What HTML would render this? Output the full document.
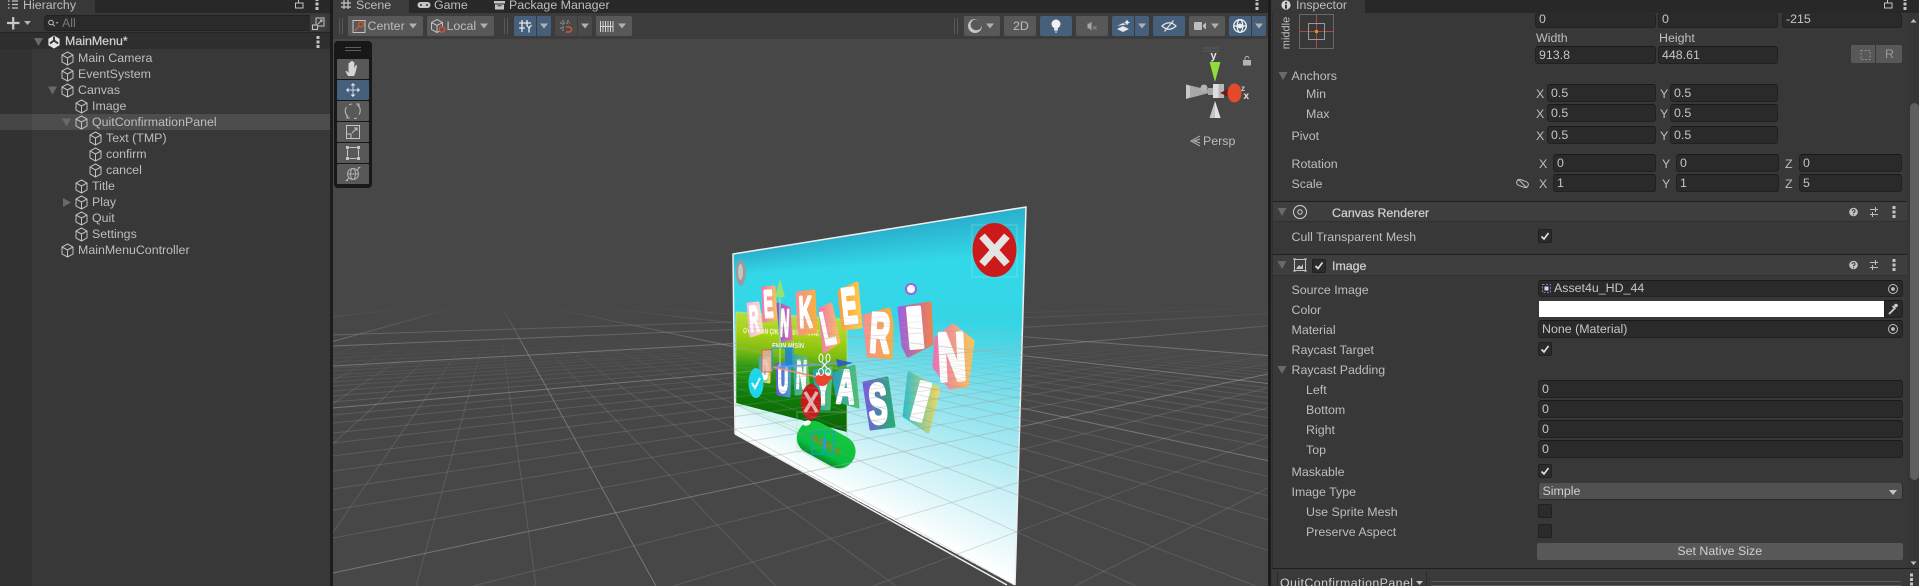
<!DOCTYPE html>
<html><head><meta charset="utf-8"><style>
html,body{margin:0;padding:0;width:1919px;height:586px;overflow:hidden;background:#383838}
body{position:relative;font-family:"Liberation Sans",sans-serif;font-size:12.4px;color:#bebebe}
#r{position:absolute;left:0;top:0;width:1919px;height:586px;overflow:hidden}
.b,.t,.f{position:absolute}
.t{white-space:nowrap;line-height:16px}
.f{box-sizing:border-box;background:#2a2a2a;border:1px solid #212121;border-top-color:#191919;border-radius:3px;color:#c6c6c6;padding-left:3px;white-space:nowrap}
.h{height:18px;line-height:16px}
.bt{position:absolute;top:16px;height:20px;background:#585858;border-radius:2px}
.bl{background:#46607c}
.tb{position:absolute;left:337px;width:32px;height:20px;background:#585858;border-radius:1px}
.c{position:absolute;width:14px;height:14px;box-sizing:border-box;background:#2b2b2b;border:1px solid #202020;border-radius:2px}
svg{position:absolute;left:0;top:0}
</style></head><body><div id="r">
<!-- Hierarchy -->
<div class="b" style="left:0;top:0;width:333px;height:13px;background:#282828"></div>
<div class="b" style="left:0;top:0;width:95px;height:13px;background:#383838"></div>
<div class="t" style="left:23px;top:-3px;color:#bdbdbd">Hierarchy</div>
<div class="b" style="left:0;top:33px;width:32px;height:553px;background:#323232"></div>
<div class="b" style="left:0;top:13px;width:330px;height:20px;background:#383838;border-bottom:1px solid #242424;box-sizing:border-box"></div>
<div class="b" style="left:44px;top:15px;width:283px;height:16px;background:#2a2a2a;border:1px solid #212121;box-sizing:border-box;border-radius:4px"></div>
<div class="b" style="left:310px;top:15px;width:17px;height:16px;background:#3f3f3f;border-radius:0 4px 4px 0"></div>
<div class="t" style="left:62px;top:15px;color:#7a7a7a">All</div>
<div class="b" style="left:0;top:33px;width:330px;height:16px;background:#2e2e2e"></div>
<div class="t" style="left:65px;top:33px;color:#d0d0d0;-webkit-text-stroke:.25px #d0d0d0">MainMenu*</div>
<div class="b" style="left:0;top:114px;width:32px;height:16px;background:#464646"></div>
<div class="b" style="left:32px;top:114px;width:298px;height:16px;background:#4d4d4d"></div>
<div class="t" style="left:78px;top:50px">Main Camera</div>
<div class="t" style="left:78px;top:66px">EventSystem</div>
<div class="t" style="left:78px;top:82px">Canvas</div>
<div class="t" style="left:92px;top:98px">Image</div>
<div class="t" style="left:92px;top:114px">QuitConfirmationPanel</div>
<div class="t" style="left:106px;top:130px">Text (TMP)</div>
<div class="t" style="left:106px;top:146px">confirm</div>
<div class="t" style="left:106px;top:162px">cancel</div>
<div class="t" style="left:92px;top:178px">Title</div>
<div class="t" style="left:92px;top:194px">Play</div>
<div class="t" style="left:92px;top:210px">Quit</div>
<div class="t" style="left:92px;top:226px">Settings</div>
<div class="t" style="left:78px;top:242px">MainMenuController</div>
<div class="b" style="left:330px;top:0;width:3px;height:586px;background:#1c1c1c"></div>

<!-- Scene -->
<div class="b" style="left:333px;top:39px;width:935px;height:547px;background:#474747"></div>
<div class="b" style="left:0;top:0;width:960px;height:540px;transform-origin:0 0;transform:matrix3d(-0.266532,-0.164309,0,-0.000557252,0.039487,0.354463,0,0.0000486852,0,0,1,0,733,254,0,1);background:linear-gradient(180deg,#2aafcc 0%,#33d8e8 12%,#34d6e6 30%,#80e0ec 50%,#c6f0f6 74%,#ffffff 100%)"></div>

<svg width="935" height="547" viewBox="333 39 935 547" style="left:333px;top:39px">
<defs>
<linearGradient id="mk1" gradientUnits="userSpaceOnUse" x1="0" y1="335" x2="0" y2="400"><stop offset="0" stop-color="#000"/><stop offset="1" stop-color="#fff"/></linearGradient>
<linearGradient id="mk2" gradientUnits="userSpaceOnUse" x1="0" y1="305" x2="0" y2="350"><stop offset="0" stop-color="#000"/><stop offset="1" stop-color="#fff"/></linearGradient>
<mask id="m1" maskUnits="userSpaceOnUse" x="333" y="39" width="935" height="547"><rect x="333" y="39" width="935" height="547" fill="url(#mk1)"/></mask>
<mask id="m2" maskUnits="userSpaceOnUse" x="333" y="39" width="935" height="547"><rect x="333" y="39" width="935" height="547" fill="url(#mk2)"/></mask>
<linearGradient id="gr" gradientUnits="userSpaceOnUse" x1="790" y1="312" x2="780" y2="425"><stop offset="0" stop-color="#b9e24a"/><stop offset=".2" stop-color="#a9d40e"/><stop offset=".36" stop-color="#7fc00c"/><stop offset=".5" stop-color="#2f9c12"/><stop offset=".72" stop-color="#108008"/><stop offset="1" stop-color="#0a6306"/></linearGradient>
<linearGradient id="l1"><stop offset="0" stop-color="#f8b8d8"/><stop offset="1" stop-color="#fbe0c8"/></linearGradient>
<linearGradient id="l2"><stop offset="0" stop-color="#f47ab0"/><stop offset="1" stop-color="#f8c060"/></linearGradient>
<linearGradient id="l3"><stop offset="0" stop-color="#8a5ad8"/><stop offset="1" stop-color="#e06cb0"/></linearGradient>
<linearGradient id="l4"><stop offset="0" stop-color="#f89090"/><stop offset="1" stop-color="#f8b040"/></linearGradient>
<linearGradient id="l5"><stop offset="0" stop-color="#f8a040"/><stop offset="1" stop-color="#ffc850"/></linearGradient>
<linearGradient id="l6"><stop offset="0" stop-color="#9a60e0"/><stop offset="1" stop-color="#f08050"/></linearGradient>
<linearGradient id="l7"><stop offset="0" stop-color="#f070b8"/><stop offset="1" stop-color="#f8c858"/></linearGradient>
<linearGradient id="l8"><stop offset="0" stop-color="#38b0b0"/><stop offset="1" stop-color="#e8d860"/></linearGradient>
<linearGradient id="l9"><stop offset="0" stop-color="#6a5ae0"/><stop offset="1" stop-color="#40a0d0"/></linearGradient>
<linearGradient id="l10"><stop offset="0" stop-color="#30b0a0"/><stop offset="1" stop-color="#70c060"/></linearGradient>
<linearGradient id="l11"><stop offset="0" stop-color="#20a0c0"/><stop offset="1" stop-color="#50c070"/></linearGradient>
<linearGradient id="l12"><stop offset="0" stop-color="#7a5ae0"/><stop offset="1" stop-color="#20b070"/></linearGradient>
<linearGradient id="l13"><stop offset="0" stop-color="#30c0c8"/><stop offset="1" stop-color="#f0d860"/></linearGradient>
<linearGradient id="btn" x1="0" y1="0" x2="0" y2="1"><stop offset="0" stop-color="#14c83c"/><stop offset=".75" stop-color="#08c040"/><stop offset="1" stop-color="#058c2c"/></linearGradient>
</defs>

<polyline points="735,434 733,254 1026,207 1015,585" fill="none" stroke="#eeeeee" stroke-width="1.5"/>
<line x1="735" y1="434" x2="1007" y2="585" stroke="#eeeeee" stroke-width="1.5"/>
<!-- green panel -->
<polygon points="736,312 847,319 847,432 736,403" fill="url(#gr)"/>
<text x="743" y="333" font-size="7.5" font-weight="700" fill="#f4f4f4" textLength="76" lengthAdjust="spacingAndGlyphs" transform="rotate(2 743 333)">OYUNDAN ÇIKMAK İSTEDİĞİNE</text>
<text x="772" y="348" font-size="7" font-weight="700" fill="#f0f0f0" textLength="32" lengthAdjust="spacingAndGlyphs">EMİN MİSİN</text>
<polygon points="736,312 847,319 847,450 736,403" fill="none" stroke="#a8f0a0" stroke-opacity=".6" stroke-width="1"/>

<!-- top-right close and oval -->
<rect x="972" y="225" width="45" height="52" fill="none" stroke="#a8f0d0" stroke-opacity=".35" transform="skewY(-3 994 250)"/>
<ellipse cx="994.5" cy="250" rx="22" ry="27" fill="#cc1a1a"/>
<path d="M982 236L1007 264M1007 236L982 264" stroke="#e4e4e4" stroke-width="7.5"/>
<ellipse cx="740.8" cy="272.7" rx="5" ry="13" fill="#9a9a9a"/><ellipse cx="740.5" cy="272" rx="2.5" ry="8" fill="#c4c4c4"/>

<!-- letter backs -->
<g stroke-width="3" stroke-linejoin="round">
<polygon points="748,304 758,303 762,332 751,336" fill="url(#l1)" stroke="url(#l1)"/>
<polygon points="763,288 774,287 776,319 764,321" fill="url(#l2)" stroke="url(#l2)"/>
<polygon points="778,304 789,308 791,339 781,341" fill="url(#l3)" stroke="url(#l3)"/>
<polygon points="797,293 814,291 816,332 799,334" fill="url(#l4)" stroke="url(#l4)"/>
<polygon points="820,309 831,304 839,342 824,352" fill="url(#l2)" stroke="url(#l2)"/>
<polygon points="839,291 857,283 861,327 843,329" fill="url(#l5)" stroke="url(#l5)"/>
<polygon points="864,316 889,309 892,323 891,358 868,356" fill="url(#l4)" stroke="url(#l4)"/>
<polygon points="899,308 930,303 932,344 908,356 903,346" fill="url(#l6)" stroke="url(#l6)"/>
<polygon points="936,338 953,325 973,341 967,386 950,388 934,367" fill="url(#l7)" stroke="url(#l7)"/>
<polygon points="760,358 769,358 769,382 761,381" fill="url(#l8)" stroke="url(#l8)"/>
<polygon points="777,364 790,364 789,396 778,394" fill="url(#l9)" stroke="url(#l9)"/>
<polygon points="794,356 806,358 809,392 796,394" fill="url(#l10)" stroke="url(#l10)"/>
<polygon points="814,371 831,368 829,409 818,409" fill="url(#l11)" stroke="url(#l11)"/>
<polygon points="833,374 854,366 858,407 838,401" fill="url(#l11)" stroke="url(#l11)"/>
<polygon points="864,383 887,378 894,426 871,429" fill="url(#l12)" stroke="url(#l12)"/>
<polygon points="909,373 939,389 928,432 904,416" fill="url(#l13)" stroke="url(#l13)"/>
</g>
<!-- letters -->
<g font-weight="700" fill="#fff" text-anchor="middle" stroke="#fff" stroke-width="2.6" stroke-linejoin="round">
<text transform="translate(755 331) rotate(-5) scale(.36 1)" font-size="36">R</text>
<text transform="translate(769 317) rotate(-3) scale(.37 1)" font-size="38">E</text>
<text transform="translate(784 336) rotate(3) scale(.33 1)" font-size="38">N</text>
<text transform="translate(806 327) rotate(-2) scale(.42 1)" font-size="44">K</text>
<text transform="translate(831 344) rotate(-12) scale(.44 1)" font-size="47">L</text>
<text transform="translate(851 323) rotate(-6) scale(.46 1)" font-size="50" stroke-width="3.2">E</text>
<text transform="translate(879 352) rotate(3) scale(.5 1)" font-size="56" stroke-width="3.6">R</text>
<text transform="translate(917 348) rotate(-5) scale(1.3 1)" font-size="59" stroke-width="3">I</text>
<text transform="translate(953 380) rotate(-3) scale(.58 1)" font-size="68" stroke-width="4">N</text>
<text transform="translate(765 379) scale(.36 1)" font-size="27">D</text>
<text transform="translate(783 392) scale(.4 1)" font-size="36" stroke-width="3">U</text>
<text transform="translate(801 388) rotate(2) scale(.37 1)" font-size="39" stroke-width="3">N</text>
<text transform="translate(823 404) scale(.45 1)" font-size="44" stroke-width="3">Y</text>
<text transform="translate(845 403) rotate(3) scale(.53 1)" font-size="47" stroke-width="3.2">A</text>
<text transform="translate(879 423) rotate(-3) scale(.5 1)" font-size="56" stroke-width="3.6">S</text>
<text transform="translate(916 420) rotate(15) scale(1.15 1)" font-size="56" stroke-width="3">I</text>
</g>
<circle cx="911" cy="289" r="5" fill="#fff" stroke="#a060e0" stroke-width="2"/>

<!-- small buttons -->
<ellipse cx="756" cy="383" rx="7.5" ry="15" fill="#14dcee"/>
<path d="M752 383l3 5 5-10" fill="none" stroke="#f4ffff" stroke-width="2"/>
<ellipse cx="811" cy="402" rx="10" ry="18" fill="#c81a1a"/>
<path d="M805 392L817 412M817 392L805 412" stroke="#e8b0b0" stroke-width="3.5"/>
<rect x="797" y="412" width="50" height="40" fill="none" stroke="#a8e0b0" stroke-opacity=".4"/>
<g transform="translate(826 445) rotate(29)">
<rect x="-31" y="-16" width="62" height="34" rx="16" fill="#a0d0a0" opacity=".35"/>
<rect x="-31" y="-17" width="62" height="33" rx="16" fill="url(#btn)"/>
<text x="0" y="3" text-anchor="middle" font-size="10" font-weight="700" fill="#a57c14" textLength="32" lengthAdjust="spacingAndGlyphs">BAŞLA</text>
</g>
<ellipse cx="807" cy="423" rx="4" ry="2.5" fill="#fff" transform="rotate(-20 807 423)"/>
<rect x="812" y="432" width="22" height="22" fill="none" stroke="#10a0d8" stroke-width="1.2"/>
<rect x="823" y="437" width="3" height="14" fill="#18a0e0"/>

<!-- floor grid -->
<g mask="url(#m1)" fill="none" stroke="#8f8f8f" stroke-opacity=".3" stroke-width="1">
<path d="M496 296L-2224 586M496 296L-2104 586M496 296L-1984 586M496 296L-1864 586M496 296L-1624 586M496 296L-1504 586M496 296L-1384 586M496 296L-1264 586M496 296L-1144 586M496 296L-1024 586M496 296L-904 586M496 296L-784 586M496 296L-664 586M496 296L-424 586M496 296L-304 586M496 296L-184 586M496 296L-64 586M496 296L56 586M496 296L176 586M496 296L296 586M496 296L416 586M496 296L536 586M496 296L776 586M496 296L896 586M496 296L1016 586M496 296L1136 586M496 296L1256 586M496 296L1376 586M496 296L1496 586M496 296L1616 586M496 296L1736 586M496 296L1976 586M496 296L2096 586M496 296L2216 586M496 296L2336 586M496 296L2456 586M496 296L2576 586M496 296L2696 586M496 296L2816 586M496 296L2936 586M496 296L3176 586M496 296L3296 586M496 296L3416 586M496 296L3536 586M496 296L3656 586M496 296L3776 586M496 296L3896 586M496 296L4016 586M496 296L4136 586"/>
<path d="M333 538L1653 292M333 510L1653 292M333 489L1653 292M333 471L1653 292M333 456L1653 292M333 443L1653 292M333 433L1653 292M333 423L1653 292M333 415L1653 292M333 402L1653 292M333 396L1653 292M333 391L1653 292M333 386L1653 292M333 382L1653 292M333 378L1653 292M333 375L1653 292M333 371L1653 292M333 368L1653 292M333 362L1653 292M333 358L1653 292M333 354L1653 292M473 586L1653 292M673 586L1653 292M873 586L1653 292M1075 586L1653 292M1269 586L1653 292"/>
</g>
<g mask="url(#m2)" fill="none" stroke="#a6a6a6" stroke-opacity=".5" stroke-width="1">
<path d="M496 296L-1744 586M496 296L-544 586M496 296L656 586M496 296L1856 586M496 296L3056 586M496 296L4256 586"/>
<path d="M333 573L1653 292M333 408L1653 292M333 366L1653 292M333 346L1653 292M333 335L1653 292"/>
</g>

<!-- gizmo over panel -->
<rect x="762" y="350" width="10" height="22" fill="#f0b0a8" fill-opacity=".75" stroke="#e06050"/>
<rect x="772" y="348" width="21" height="20" fill="none" stroke="#2098e0" stroke-width="1.2"/>
<rect x="785" y="348" width="7" height="19" fill="#1a80e0" fill-opacity=".85"/>
<path d="M780 296V367" stroke="#a0e880" stroke-opacity=".85" stroke-width="1.5"/>
<polygon points="780,279 775,297 785,297" fill="#98e070"/>
<path d="M775 367L840 363" stroke="#6a9ae8" stroke-width="1.5"/>
<polygon points="853,363 836,359 838,367" fill="#2a60c8"/>
<path d="M773 367L817 377" stroke="#f08a70" stroke-width="1.5"/>
<ellipse cx="822" cy="380" rx="7" ry="6" fill="#e8452a"/><polygon points="834,377 820,373 822,386" fill="#e8452a"/>
<g fill="none" stroke="#fff" stroke-width="1"><ellipse cx="821" cy="358" rx="2" ry="4"/><ellipse cx="828" cy="358" rx="2" ry="4"/><ellipse cx="821" cy="372" rx="2.5" ry="3.5"/><ellipse cx="828" cy="372" rx="2.5" ry="3.5"/><path d="M822 362L827 368M827 362L822 368"/></g>
</svg>

<!-- Scene chrome -->
<div class="b" style="left:333px;top:0;width:935px;height:13px;background:#282828"></div>
<div class="b" style="left:333px;top:0;width:76px;height:13px;background:#3c3c3c"></div>
<div class="t" style="left:356px;top:-3px">Scene</div>
<div class="t" style="left:434px;top:-3px">Game</div>
<div class="t" style="left:509px;top:-3px">Package Manager</div>
<div class="b" style="left:333px;top:13px;width:935px;height:26px;background:#3c3c3c"></div>
<div class="bt" style="left:348px;width:75px"></div>
<div class="t" style="left:367.5px;top:18px;color:#bdbdbd">Center</div>
<div class="bt" style="left:427px;width:67px"></div>
<div class="t" style="left:446.5px;top:18px;color:#bdbdbd">Local</div>
<div class="bt bl" style="left:514px;width:22px;border-radius:2px 0 0 2px"></div>
<div class="bt bl" style="left:537px;width:14px;border-radius:0 2px 2px 0"></div>
<div class="bt" style="left:555px;width:22px;background:#494949;border-radius:2px 0 0 2px"></div>
<div class="bt" style="left:578px;width:14px;background:#494949;border-radius:0 2px 2px 0"></div>
<div class="bt" style="left:596px;width:36px"></div>
<div class="bt" style="left:964px;width:36px"></div>
<div class="bt" style="left:1004px;width:32px"></div>
<div class="t" style="left:1013px;top:18px;color:#bdbdbd">2D</div>
<div class="bt bl" style="left:1040px;width:32px"></div>
<div class="bt" style="left:1076px;width:32px"></div>
<div class="bt bl" style="left:1112px;width:22px;border-radius:2px 0 0 2px"></div>
<div class="bt bl" style="left:1135px;width:14px;border-radius:0 2px 2px 0"></div>
<div class="bt bl" style="left:1153px;width:32px"></div>
<div class="bt" style="left:1189px;width:36px"></div>
<div class="bt bl" style="left:1229px;width:22px;border-radius:2px 0 0 2px"></div>
<div class="bt bl" style="left:1252px;width:14px;border-radius:0 2px 2px 0"></div>
<!-- tool palette -->
<div class="b" style="left:334px;top:41px;width:38px;height:147px;background:#181818;border-radius:4px"></div>
<div class="tb" style="top:59px"></div>
<div class="tb" style="top:80px;background:#46607c"></div>
<div class="tb" style="top:101px"></div>
<div class="tb" style="top:122px"></div>
<div class="tb" style="top:143px"></div>
<div class="tb" style="top:164px"></div>
<div class="t" style="left:1203px;top:133px;color:#bdbdbd">Persp</div>
<div class="b" style="left:1268px;top:0;width:3px;height:586px;background:#1c1c1c"></div>

<!-- Inspector -->
<div class="b" style="left:1271px;top:0;width:648px;height:13px;background:#282828"></div>
<div class="b" style="left:1271px;top:0;width:94px;height:13px;background:#383838"></div>
<div class="t" style="left:1296px;top:-3px">Inspector</div>
<div class="t" style="left:1270px;top:25px;width:33px;text-align:center;font-size:11px;transform:rotate(-90deg)">middle</div>
<div class="f h" style="left:1535px;top:13px;width:121px;height:15px;line-height:13px;border-top:0">0</div>
<div class="f h" style="left:1658px;top:13px;width:120px;height:15px;line-height:13px;border-top:0">0</div>
<div class="f h" style="left:1782px;top:13px;width:120px;height:15px;line-height:13px;border-top:0">-215</div>
<div class="t" style="left:1536px;top:30px">Width</div>
<div class="t" style="left:1659px;top:30px">Height</div>
<div class="f h" style="left:1535px;top:46px;width:121px">913.8</div>
<div class="f h" style="left:1658px;top:46px;width:120px">448.61</div>
<div class="b" style="left:1851px;top:45px;width:24px;height:18px;background:#585858;border-radius:2px 0 0 2px"></div>
<div class="b" style="left:1876px;top:45px;width:26px;height:18px;background:#585858;border-radius:0 2px 2px 0"></div>
<div class="t" style="left:1885px;top:46px;color:#9a9a9a">R</div>

<div class="t" style="left:1291.5px;top:68px">Anchors</div>
<div class="t" style="left:1306px;top:86px">Min</div>
<div class="t" style="left:1306px;top:106px">Max</div>
<div class="t" style="left:1291.5px;top:128px">Pivot</div>
<div class="t" style="left:1536px;top:86px">X</div><div class="f h" style="left:1547px;top:84px;width:109px">0.5</div>
<div class="t" style="left:1660px;top:86px">Y</div><div class="f h" style="left:1670px;top:84px;width:108px">0.5</div>
<div class="t" style="left:1536px;top:106px">X</div><div class="f h" style="left:1547px;top:104px;width:109px">0.5</div>
<div class="t" style="left:1660px;top:106px">Y</div><div class="f h" style="left:1670px;top:104px;width:108px">0.5</div>
<div class="t" style="left:1536px;top:128px">X</div><div class="f h" style="left:1547px;top:126px;width:109px">0.5</div>
<div class="t" style="left:1660px;top:128px">Y</div><div class="f h" style="left:1670px;top:126px;width:108px">0.5</div>
<div class="t" style="left:1291.5px;top:156px">Rotation</div>
<div class="t" style="left:1291.5px;top:176px">Scale</div>
<div class="t" style="left:1539px;top:156px">X</div><div class="f h" style="left:1553px;top:154px;width:103px">0</div>
<div class="t" style="left:1662px;top:156px">Y</div><div class="f h" style="left:1676px;top:154px;width:103px">0</div>
<div class="t" style="left:1785px;top:156px">Z</div><div class="f h" style="left:1799px;top:154px;width:103px">0</div>
<div class="t" style="left:1539px;top:176px">X</div><div class="f h" style="left:1553px;top:174px;width:103px">1</div>
<div class="t" style="left:1662px;top:176px">Y</div><div class="f h" style="left:1676px;top:174px;width:103px">1</div>
<div class="t" style="left:1785px;top:176px">Z</div><div class="f h" style="left:1799px;top:174px;width:103px">5</div>

<div class="b" style="left:1272px;top:201px;width:635px;height:21px;background:#3e3e3e;border-top:1px solid #1f1f1f;border-bottom:1px solid #303030;box-sizing:border-box"></div>
<div class="t" style="left:1332px;top:205px;color:#cfcfcf;-webkit-text-stroke:.25px #cfcfcf">Canvas Renderer</div>
<div class="t" style="left:1291.5px;top:229px">Cull Transparent Mesh</div>
<div class="c" style="left:1538px;top:229px"></div>
<div class="b" style="left:1272px;top:254px;width:635px;height:22px;background:#3e3e3e;border-top:1px solid #1f1f1f;border-bottom:1px solid #303030;box-sizing:border-box"></div>
<div class="c" style="left:1312px;top:259px"></div>
<div class="t" style="left:1332px;top:258px;color:#cfcfcf;-webkit-text-stroke:.25px #cfcfcf">Image</div>
<div class="t" style="left:1291.5px;top:282px">Source Image</div>
<div class="f" style="left:1538px;top:280px;width:364.5px;height:17px;line-height:15px;padding-left:15px">Asset4u_HD_44</div>
<div class="t" style="left:1291.5px;top:302px">Color</div>
<div class="b" style="left:1539px;top:301px;width:345px;height:16px;background:#fff"></div>
<div class="f" style="left:1884px;top:300px;width:18.5px;height:18px;border-radius:0 3px 3px 0;padding:0"></div>
<div class="t" style="left:1291.5px;top:322px">Material</div>
<div class="f" style="left:1538px;top:320px;width:364.5px;height:18px;line-height:16px">None (Material)</div>
<div class="t" style="left:1291.5px;top:342px">Raycast Target</div>
<div class="c" style="left:1538px;top:342px"></div>
<div class="t" style="left:1291.5px;top:362px">Raycast Padding</div>
<div class="t" style="left:1306px;top:382px">Left</div>
<div class="f h" style="left:1538px;top:380px;width:364.5px">0</div>
<div class="t" style="left:1306px;top:402px">Bottom</div>
<div class="f h" style="left:1538px;top:400px;width:364.5px">0</div>
<div class="t" style="left:1306px;top:422px">Right</div>
<div class="f h" style="left:1538px;top:420px;width:364.5px">0</div>
<div class="t" style="left:1306px;top:442px">Top</div>
<div class="f h" style="left:1538px;top:440px;width:364.5px">0</div>
<div class="t" style="left:1291.5px;top:464px">Maskable</div>
<div class="c" style="left:1538px;top:464px"></div>
<div class="t" style="left:1291.5px;top:484px">Image Type</div>
<div class="b" style="left:1538px;top:483px;width:364.5px;height:17px;background:#515151;border:1px solid #2b2b2b;border-top:0;box-sizing:border-box;border-radius:3px"></div>
<div class="t" style="left:1542.5px;top:483px;color:#d0d0d0">Simple</div>
<div class="t" style="left:1306px;top:504px">Use Sprite Mesh</div>
<div class="c" style="left:1538px;top:504px"></div>
<div class="t" style="left:1306px;top:524px">Preserve Aspect</div>
<div class="c" style="left:1538px;top:524px"></div>
<div class="b" style="left:1537px;top:543px;width:365.5px;height:17px;background:#585858;border-radius:2px"></div>
<div class="t" style="left:1537px;top:543px;width:365.5px;text-align:center;color:#d0d0d0">Set Native Size</div>
<div class="b" style="left:1907px;top:13px;width:12px;height:555px;background:#363636"></div>
<div class="b" style="left:1909.5px;top:103px;width:9.5px;height:377px;background:#5f5f5f;border-radius:5px"></div>
<div class="b" style="left:1272px;top:568px;width:647px;height:18px;background:#3a3a3a;border-top:1px solid #1f1f1f;box-sizing:border-box"></div>
<div class="t" style="left:1280px;top:575px;height:11px;overflow:hidden;color:#d0d0d0;letter-spacing:.42px">QuitConfirmationPanel</div>
<div class="b" style="left:1277px;top:571px;width:1px;height:15px;background:#2b2b2b"></div>
<div class="b" style="left:1426px;top:571px;width:1px;height:15px;background:#2b2b2b"></div>
<div class="b" style="left:1431px;top:581px;width:470px;height:1px;background:#5a5a5a"></div>
<div class="b" style="left:1431px;top:585px;width:470px;height:1px;background:#5a5a5a"></div>
<div class="b" style="left:1272px;top:13px;width:1px;height:555px;background:#2f2f2f"></div>

<!-- All icons -->
<svg width="1919" height="586" viewBox="0 0 1919 586">
<defs>
<g id="cb" fill="none" stroke="#c0c0c0" stroke-width="1"><path d="M0-6.5L5.5-3.5V3.5L0 6.5L-5.5 3.5V-3.5ZM-5.5-3.5L0-.5L5.5-3.5M0-.5V6.5"/></g>
<path id="dots" d="M-1.5-6h3v3h-3zM-1.5-1.5h3v3h-3zM-1.5 3h3v3h-3z" fill="#c4c4c4"/>
<path id="dn" d="M-4-2.5h8l-4 5z" fill="#b0b0b0"/>
<path id="tr" d="M-4.5-4h9l-4.5 8z" fill="#696969"/>
<path id="chk" d="M-3.5 .5L-1 3L3.5-3" fill="none" stroke="#e4e4e4" stroke-width="1.6"/>
<g id="lk" fill="none" stroke="#c4c4c4" stroke-width="1"><rect x="-3.5" y="0" width="7.5" height="5"/><path d="M-.5 0V-3Q-.5-5 2-5H4"/></g>
<g id="sl" stroke="#bdbdbd" stroke-width="1"><path d="M-4-2.5h8M-4 2.5h8M1.5-5v5M-1.5 0v5"/></g>
<g id="hp"><circle r="4.3" fill="#c4c4c4"/><path d="M-1.5-1Q-1-2.5 0-2.5T1.5-1Q1.5 0 0 .6V1.3M0 2.2v1" fill="none" stroke="#3a3a3a" stroke-width="1.1"/></g>
<g id="cir" fill="none" stroke="#bdbdbd"><circle r="4.5"/><circle r="1.4" fill="#bdbdbd"/></g>
</defs>

<!-- hierarchy icons -->
<path d="M8 1h1.5M12 1h6M8 4.5h1.5M12 4.5h6M8 8h1.5M12 8h6" stroke="#c4c4c4" stroke-width="1.2"/>
<use href="#lk" x="299" y="3"/><use href="#dots" x="317" y="4"/>
<path d="M7 23h12.5M13.2 17v12.5" stroke="#c8c8c8" stroke-width="2.2"/>
<path d="M24 21h7l-3.5 4z" fill="#b4b4b4"/>
<g fill="none" stroke="#bdbdbd" stroke-width="1"><circle cx="51" cy="22.5" r="2.3"/><path d="M52.8 24.3l2 2"/></g>
<path d="M55.5 22h3l-1.5 2z" fill="#9a9a9a"/>
<g fill="none" stroke="#c4c4c4" stroke-width="1"><rect x="316" y="18" width="8" height="8"/><rect x="312.5" y="25" width="5" height="4.5" fill="#3f3f3f"/><path d="M318 24l4-4M320 20h2v2"/></g>
<use href="#tr" x="38.5" y="42"/>
<g transform="translate(54 42)"><polygon points="0,-6.5 5.6,-3.2 5.6,3.2 0,6.5 -5.6,3.2 -5.6,-3.2" fill="#e4e4e4"/><path d="M0-1.5L-4 1.5M0-1.5L4 1.5M0-1.5V-5.5" stroke="#2e2e2e" stroke-width="1.8"/></g>
<use href="#dots" x="318" y="42"/>
<use href="#cb" x="67.5" y="58.5"/><use href="#cb" x="67.5" y="74.5"/><use href="#cb" x="67.5" y="90.5"/>
<use href="#tr" x="52.5" y="90.5"/>
<use href="#cb" x="81.5" y="106.5"/><use href="#cb" x="81.5" y="122.5"/>
<use href="#tr" x="66.5" y="122.5"/>
<use href="#cb" x="95.5" y="138.5"/><use href="#cb" x="95.5" y="154.5"/><use href="#cb" x="95.5" y="170.5"/>
<use href="#cb" x="81.5" y="186.5"/><use href="#cb" x="81.5" y="202.5"/>
<path d="M63 198v9l8-4.5z" fill="#696969"/>
<use href="#cb" x="81.5" y="218.5"/><use href="#cb" x="81.5" y="234.5"/>
<use href="#cb" x="67.5" y="250.5"/>

<!-- scene tab icons -->
<path d="M341 3h10M341 7h10M344 0v9M348 0v9" stroke="#c4c4c4" stroke-width="1.2"/>
<rect x="417.5" y="2" width="13" height="6" rx="3" fill="#c4c4c4"/><circle cx="421" cy="5" r="1" fill="#333"/><circle cx="427" cy="5" r="1" fill="#333"/>
<path d="M494 1h11v2.5h-11zM495 4.5h9v5h-9z" fill="#c4c4c4"/><path d="M497.5 5.8h4" stroke="#333"/>
<use href="#dots" x="1257" y="4"/>

<!-- toolbar -->
<path d="M339.5 18v16M342.5 18v16M504.5 18v16M507.5 18v16M954.5 18v16M957.5 18v16" stroke="#585858"/>
<rect x="353" y="20.5" width="12" height="12" fill="none" stroke="#c4c4c4"/>
<path d="M355 31l4-5" stroke="#e06a40"/><circle cx="361" cy="24.5" r="2.5" fill="none" stroke="#e0552c" stroke-width="1.2"/>
<use href="#dn" x="413" y="26"/>
<g transform="translate(437 26)"><use href="#cb"/></g><circle cx="442" cy="29.5" r="2.7" fill="#585858" stroke="#e0552c" stroke-width="1.2"/>
<use href="#dn" x="484" y="26"/>
<path d="M519 23h12M519 28h6M522 20v12M527 20v6M526.5 25l2.5 3 2.5-3M529 28v4.5" fill="none" stroke="#eaeaea" stroke-width="1.3"/>
<use href="#dn" x="544" y="26"/>
<path d="M560 23h10M560 28h4M563 20v12M568 20v3" stroke="#8a8a8a" stroke-width="1.2" stroke-dasharray="2 1"/>
<path d="M566 27h3a2.5 2.5 0 0 1 0 5h-3" fill="none" stroke="#c8602e" stroke-width="1.4"/>
<use href="#dn" x="585" y="26"/>
<path d="M600.5 21v11M603 21v11M605.5 21v11M608 21v11M610.5 21v11M613 21v11M600 26.5h13" stroke="#d4d4d4" stroke-width="1"/>
<use href="#dn" x="622" y="26"/>
<circle cx="975" cy="26" r="7" fill="#c4c4c4"/><ellipse cx="976.3" cy="24.8" rx="5.6" ry="5.4" fill="#585858"/>
<use href="#dn" x="990" y="26"/>
<circle cx="1056" cy="24" r="4.5" fill="#f0f0f0"/><path d="M1054 28.5h4v2h-4zM1055 31.5h2v1h-2z" fill="#f0f0f0"/>
<path d="M1087.5 23.5h2l2-2v9l-2-2h-2z" fill="#a8a8a8"/><path d="M1093 26l3.5 3.5M1096.5 26l-3.5 3.5" stroke="#8a8a8a"/>
<path d="M1117 29l6-3 6 3-6 3zM1117 26l6-3 3 1.5" fill="#e8e8e8"/><path d="M1127 19.5l1 2 2 1-2 1-1 2-1-2-2-1 2-1z" fill="#e8e8e8"/>
<use href="#dn" x="1142" y="26"/>
<path d="M1162 26q7-6.5 14 0q-7 6.5-14 0zM1164.5 31.5l9-11" fill="none" stroke="#e6e6e6" stroke-width="1.2"/>
<rect x="1194" y="22" width="8" height="8" rx="1" fill="#bdbdbd"/><path d="M1203 25l3-2.5v7l-3-2.5z" fill="#bdbdbd"/>
<use href="#dn" x="1215" y="26"/>
<g fill="none" stroke="#f0f0f0" stroke-width="1.3"><circle cx="1240" cy="26" r="6.3"/><ellipse cx="1240" cy="26" rx="2.8" ry="6.3"/><path d="M1233.7 26h12.6"/></g><circle cx="1240" cy="26" r="2.5" fill="#f0f0f0"/>
<use href="#dn" x="1259" y="26"/>
<!-- tool palette icons -->
<path d="M345 47.5h16M345 50.5h16" stroke="#5e5e5e"/>
<path d="M348 76l-2.5-4.5 1-.8 2 2V63h1.4v4V61.6h1.5V67v-6h1.5v6V62h1.4v6l1.5-3 1.3.6-1.5 6.5-1.5 3.9h-5.5z" fill="#d4d4d4"/>
<path d="M353 84v12M347 90h12" stroke="#cfd6dc"/><path d="M353 83l-2.5 2.5h5zM353 97l-2.5-2.5h5zM346 90l2.5-2.5v5zM360 90l-2.5-2.5v5z" fill="#dfe6ec"/>
<g fill="none" stroke="#b8b8b8" stroke-width="1.1"><path d="M357.5 105a7 7 0 0 1 1.5 9.5M348 116.5a7 7 0 0 1-1.5-9.5"/><path d="M349 105a7 7 0 0 1 3-1M357 118a7 7 0 0 1-3 .5"/><path d="M356 104l3 0v3M350 118h-3v-3"/></g>
<g fill="none" stroke="#c4c4c4"><rect x="346.5" y="125.5" width="13" height="13"/><path d="M352 133l5-5M354 128h3v3M346.5 134h4.5v4.5"/></g>
<g fill="#c4c4c4"><rect x="346" y="146" width="3" height="3"/><rect x="357" y="146" width="3" height="3"/><rect x="346" y="157" width="3" height="3"/><rect x="357" y="157" width="3" height="3"/></g><path d="M349.5 147.5h7M349.5 158.5h7M347.5 149.5v7M358.5 149.5v7" stroke="#c4c4c4"/>
<g fill="none" stroke="#b0b0b0"><circle cx="353" cy="174" r="5.5"/><ellipse cx="353" cy="174" rx="2.5" ry="5.5"/><path d="M347.5 174h11M346 181l3-3M360 167l-3 3"/></g>
<path d="M345 181h3v-2zM361 167h-3v2z" fill="#b0b0b0"/>

<!-- scene gizmo -->
<path d="M1203 48h16M1203 51h16" stroke="#5b5b5b"/>
<text x="1213.5" y="59" font-size="11" font-weight="700" fill="#e4e4e4" text-anchor="middle">y</text>
<g fill="#b4b4b4"><rect x="1243" y="60" width="8" height="5.5" rx=".5"/></g><path d="M1245 60v-1.5a2 2 0 0 1 4 0" fill="none" stroke="#b4b4b4"/>
<polygon points="1215,82 1209.5,62 1220.5,62" fill="#8fdc3a"/>
<polygon points="1186,84.5 1186,99 1209,93 1209,90" fill="#a8a8a8"/><polygon points="1186,84.5 1186,99 1190,97 1190,86" fill="#c8c8c8"/>
<circle cx="1204" cy="88" r="3.5" fill="#b4b4b4"/>
<rect x="1208" y="88" width="6" height="7" fill="#a6a6a6"/>
<rect x="1213" y="84" width="5.5" height="14" fill="#dedede"/><rect x="1218.5" y="84" width="5.5" height="14" fill="#b8b8b8"/>
<polygon points="1215,101 1209.5,118 1220.5,118" fill="#c4c4c4"/><polygon points="1215,101 1215,118 1220.5,118" fill="#e2e2e2"/>
<polygon points="1220,93 1234,86 1234,99" fill="#6e1a14"/>
<ellipse cx="1234.5" cy="93" rx="7" ry="9.5" fill="#e34a2a"/>
<text x="1241" y="91" font-size="8" font-weight="700" fill="#cfcfcf">z</text>
<text x="1243.5" y="99" font-size="10" font-weight="700" fill="#e4e4e4">x</text>
<path d="M1200 136l-9 5 9 5M1200 139l-6 2 6 2" fill="none" stroke="#bdbdbd"/>

<!-- inspector icons -->
<circle cx="1286" cy="5" r="4.6" fill="#d4d4d4"/><path d="M1285 2h2v1.6h-2zM1285 4.6h2v4h-2z" fill="#333"/>
<use href="#lk" x="1888" y="3"/><use href="#dots" x="1905" y="4"/>
<g fill="none">
<rect x="1299.5" y="14.5" width="34" height="34" stroke="#686868"/>
<path d="M1316.5 14.5v34M1299.5 31.5h34" stroke="#a84c4c"/>
<rect x="1308.5" y="23.5" width="16" height="16" stroke="#9a9a9a"/>
</g>
<rect x="1315" y="30" width="3" height="3" fill="#d89018"/>
<rect x="1861" y="50.5" width="9" height="9" fill="none" stroke="#8f8f8f" stroke-dasharray="2 1.5"/>
<path d="M1913.5 19l-3 3.5h6zM1913.5 565l-3-3.5h6z" fill="#bdbdbd"/>
<use href="#tr" x="1283" y="76"/>
<g fill="none" stroke="#bdbdbd" stroke-width="1"><rect x="1516.5" y="180.5" width="12" height="6" rx="3" transform="rotate(20 1522.5 183.5)"/><path d="M1518 179l9 9"/></g>
<use href="#tr" x="1282" y="212"/>
<g fill="none" stroke="#d4d4d4"><circle cx="1300" cy="212" r="2.2"/><circle cx="1300" cy="212" r="6.5"/></g>
<use href="#hp" x="1853.5" y="212"/><use href="#sl" x="1874" y="212"/><use href="#dots" x="1894" y="212"/>
<use href="#chk" x="1545" y="236"/>
<use href="#tr" x="1282" y="265"/>
<g fill="none" stroke="#c4c4c4"><rect x="1294.5" y="259.5" width="11" height="11"/><path d="M1293 259h3M1293 271h3M1304 259h3M1304 271h3"/></g><path d="M1296 269l3-4 2 2 2-3v5z" fill="#c4c4c4"/>
<use href="#chk" x="1319" y="265.5"/>
<use href="#hp" x="1853.5" y="265"/><use href="#sl" x="1874" y="265"/><use href="#dots" x="1894" y="265"/>
<rect x="1542.5" y="284.5" width="8" height="8" fill="none" stroke="#8a70c8" stroke-dasharray="2 1.5"/><rect x="1544.5" y="286.5" width="4" height="4" fill="#d8d8d8"/>
<use href="#cir" x="1893" y="289"/>
<path d="M1889 314l5-5M1892.5 306l3 3" stroke="#d0d0d0" stroke-width="1.8"/><circle cx="1896" cy="305.5" r="1.8" fill="#d0d0d0"/>
<use href="#cir" x="1893" y="329"/>
<use href="#chk" x="1545" y="349"/>
<use href="#tr" x="1282" y="370"/>
<use href="#chk" x="1545" y="471"/>
<path d="M1889 490h8l-4 5z" fill="#c4c4c4"/>
<path d="M1416 581h7l-3.5 4z" fill="#c4c4c4"/>
<use href="#dots" x="1911.5" y="579.5"/>
</svg>
</div></body></html>
